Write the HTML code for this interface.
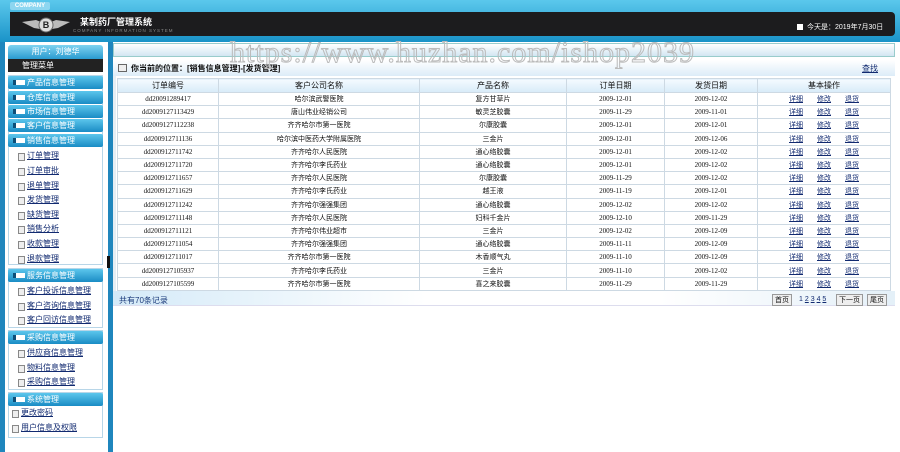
<!DOCTYPE html>
<html><head><meta charset="utf-8"><style>
*{margin:0;padding:0;box-sizing:border-box}
body{width:900px;height:452px;overflow:hidden;background:#fff;font-family:"Liberation Sans","Noto Sans CJK SC",sans-serif;font-size:8px;color:#111;position:relative}
.a{position:absolute}
.mh{position:absolute;left:8px;width:95px;height:13px;background:linear-gradient(#5cc6ec,#1a8cc4);border-radius:2px;color:#fff;font-size:8px;line-height:13px;padding-left:19px}
.mh:before{content:"";position:absolute;left:5px;top:4px;width:9px;height:5px;background:#fff;border-left:3px solid #0d4e78}
.si{position:absolute;left:18px;color:#112a70;text-decoration:underline;font-size:8px;line-height:10px;padding-left:9px}
.si:before{content:"";position:absolute;left:0;top:2px;width:5px;height:6px;border:1px solid #888;background:#eee}
table{border-collapse:collapse;position:absolute;left:117px;top:78px;width:774px;font-size:7px}
td,th{border:1px solid #cdd9e3;text-align:center;height:13.2px;font-weight:normal;font-family:"Liberation Serif","Noto Sans CJK SC",serif}
th{background:linear-gradient(#f4faff,#d8ebf8);height:14px;font-family:"Liberation Sans","Noto Sans CJK SC",sans-serif;font-size:8px}
td a{color:#112a70;text-decoration:underline;margin:0 7px;font-family:"Liberation Sans","Noto Sans CJK SC",sans-serif}
</style></head><body>
<div class="a" style="left:0;top:0;width:900px;height:42px;background:linear-gradient(#5bc8ec,#1a93c8)"></div>
<div class="a" style="left:10px;top:2px;width:40px;height:8px;background:#8dd6f0;border-radius:2px;color:#fff;font-size:6px;font-weight:bold;line-height:8px;text-align:center">COMPANY</div>
<div class="a" style="left:10px;top:12px;width:885px;height:24px;background:#1c1c1e;border-radius:0 4px 4px 0"></div>
<div class="a" style="left:22px;top:14px;width:48px;height:20px;"><svg width="48" height="20"><path d="M0 8 L14 6 L24 10 L34 6 L48 8 L36 14 L24 16 L12 14Z" fill="#bbb"/><circle cx="24" cy="11" r="7" fill="#ddd" stroke="#666"/><text x="24" y="14" font-size="9" text-anchor="middle" font-weight="bold" fill="#222">B</text></svg></div>
<div class="a" style="left:80px;top:15px;color:#fff;font-size:9px;font-weight:bold">某制药厂管理系统</div>
<div class="a" style="left:73px;top:28px;color:#888;font-size:4.5px;letter-spacing:1px">COMPANY INFORMATION SYSTEM</div>
<div class="a" style="left:797px;top:24px;width:6px;height:6px;background:#fff"></div>
<div class="a" style="left:807px;top:22px;color:#fff;font-size:7px">今天是：2019年7月30日</div>
<!-- sidebar -->
<div class="a" style="left:0;top:42px;width:113px;height:410px;background:#1f86bd"></div>
<div class="a" style="left:5px;top:42px;width:103px;height:410px;background:#fff"></div>
<div class="a" style="left:8px;top:45px;width:95px;height:14px;background:linear-gradient(#7fd3f0,#2a9bd0);border-radius:3px 3px 0 0;color:#fff;text-align:center;line-height:14px;font-size:8px">用户：刘德华</div>
<div class="a" style="left:8px;top:59px;width:95px;height:13px;background:#222;color:#fff;line-height:13px;padding-left:14px;font-size:8px">管理菜单</div>
<div class="a" style="left:8px;top:75px;width:95px;height:190px;border:1px solid #b8d6e8"></div>
<div class="mh" style="top:76px">产品信息管理</div>
<div class="mh" style="top:91px">仓库信息管理</div>
<div class="mh" style="top:105px">市场信息管理</div>
<div class="mh" style="top:119px">客户信息管理</div>
<div class="mh" style="top:134px">销售信息管理</div>
<div class="si" style="top:151px">订单管理</div><div class="si" style="top:166px">订单审批</div>
<div class="si" style="top:181px">退单管理</div><div class="si" style="top:195px">发货管理</div>
<div class="si" style="top:210px">缺货管理</div><div class="si" style="top:224px">销售分析</div>
<div class="si" style="top:239px">收款管理</div><div class="si" style="top:254px">退款管理</div>
<div class="a" style="left:8px;top:268px;width:95px;height:60px;border:1px solid #b8d6e8"></div>
<div class="mh" style="top:269px">服务信息管理</div>
<div class="si" style="top:286px">客户投诉信息管理</div><div class="si" style="top:301px">客户咨询信息管理</div><div class="si" style="top:315px">客户回访信息管理</div>
<div class="a" style="left:8px;top:330px;width:95px;height:60px;border:1px solid #b8d6e8"></div>
<div class="mh" style="top:331px">采购信息管理</div>
<div class="si" style="top:348px">供应商信息管理</div><div class="si" style="top:363px">物料信息管理</div><div class="si" style="top:377px">采购信息管理</div>
<div class="a" style="left:8px;top:392px;width:95px;height:46px;border:1px solid #b8d6e8"></div>
<div class="mh" style="top:393px">系统管理</div>
<div class="si" style="top:408px;left:12px">更改密码</div><div class="si" style="top:423px;left:12px">用户信息及权限</div>
<div class="a" style="left:107px;top:256px;width:3px;height:12px;background:#111"></div>
<!-- main -->
<div class="a" style="left:113px;top:43px;width:782px;height:14px;background:linear-gradient(#fff,#d2e6f2);border:1px solid #9cc"></div>
<div class="a" style="left:113px;top:60px;width:782px;height:16px;background:linear-gradient(#fff,#dcecf8)"></div>
<div class="a" style="left:118px;top:64px;width:9px;height:8px;border:1px solid #666;background:#eee"></div>
<div class="a" style="left:131px;top:63px;font-size:8px;font-weight:bold">你当前的位置：[销售信息管理]-[发货管理]</div>
<div class="a" style="left:862px;top:63px;font-size:8px;color:#112a70;text-decoration:underline">查找</div>
<div class="a" style="left:113px;top:76px;width:3px;height:215px;background:#e6eef4"></div>
<table>
<tr><th style="width:101px">订单编号</th><th style="width:201px">客户公司名称</th><th style="width:147px">产品名称</th><th style="width:98px">订单日期</th><th style="width:93px">发货日期</th><th>基本操作</th></tr>
<tr><td>dd20091289417</td><td>哈尔滨武警医院</td><td>复方甘草片</td><td>2009-12-01</td><td>2009-12-02</td><td><a>详细</a><a>修改</a><a>退货</a></td></tr>
<tr><td>dd2009127113429</td><td>唐山伟业经销公司</td><td>敏灵芝胶囊</td><td>2009-11-29</td><td>2009-11-01</td><td><a>详细</a><a>修改</a><a>退货</a></td></tr>
<tr><td>dd2009127112238</td><td>齐齐哈尔市第一医院</td><td>尔康胶囊</td><td>2009-12-01</td><td>2009-12-01</td><td><a>详细</a><a>修改</a><a>退货</a></td></tr>
<tr><td>dd200912711136</td><td>哈尔滨中医药大学附属医院</td><td>三金片</td><td>2009-12-01</td><td>2009-12-06</td><td><a>详细</a><a>修改</a><a>退货</a></td></tr>
<tr><td>dd200912711742</td><td>齐齐哈尔人民医院</td><td>通心络胶囊</td><td>2009-12-01</td><td>2009-12-02</td><td><a>详细</a><a>修改</a><a>退货</a></td></tr>
<tr><td>dd200912711720</td><td>齐齐哈尔李氏药业</td><td>通心络胶囊</td><td>2009-12-01</td><td>2009-12-02</td><td><a>详细</a><a>修改</a><a>退货</a></td></tr>
<tr><td>dd200912711657</td><td>齐齐哈尔人民医院</td><td>尔康胶囊</td><td>2009-11-29</td><td>2009-12-02</td><td><a>详细</a><a>修改</a><a>退货</a></td></tr>
<tr><td>dd200912711629</td><td>齐齐哈尔李氏药业</td><td>越王液</td><td>2009-11-19</td><td>2009-12-01</td><td><a>详细</a><a>修改</a><a>退货</a></td></tr>
<tr><td>dd200912711242</td><td>齐齐哈尔强强集团</td><td>通心络胶囊</td><td>2009-12-02</td><td>2009-12-02</td><td><a>详细</a><a>修改</a><a>退货</a></td></tr>
<tr><td>dd200912711148</td><td>齐齐哈尔人民医院</td><td>妇科千金片</td><td>2009-12-10</td><td>2009-11-29</td><td><a>详细</a><a>修改</a><a>退货</a></td></tr>
<tr><td>dd200912711121</td><td>齐齐哈尔伟业超市</td><td>三金片</td><td>2009-12-02</td><td>2009-12-09</td><td><a>详细</a><a>修改</a><a>退货</a></td></tr>
<tr><td>dd200912711054</td><td>齐齐哈尔强强集团</td><td>通心络胶囊</td><td>2009-11-11</td><td>2009-12-09</td><td><a>详细</a><a>修改</a><a>退货</a></td></tr>
<tr><td>dd200912711017</td><td>齐齐哈尔市第一医院</td><td>木香顺气丸</td><td>2009-11-10</td><td>2009-12-09</td><td><a>详细</a><a>修改</a><a>退货</a></td></tr>
<tr><td>dd2009127105937</td><td>齐齐哈尔李氏药业</td><td>三金片</td><td>2009-11-10</td><td>2009-12-02</td><td><a>详细</a><a>修改</a><a>退货</a></td></tr>
<tr><td>dd2009127105599</td><td>齐齐哈尔市第一医院</td><td>喜之来胶囊</td><td>2009-11-29</td><td>2009-11-29</td><td><a>详细</a><a>修改</a><a>退货</a></td></tr>
</table>
<div class="a" style="left:113px;top:291px;width:782px;height:15px;background:linear-gradient(90deg,#d4eaf8,#fff 40%,#fff 70%,#e4f0f8);border-bottom:1px solid #dde"></div>
<div class="a" style="left:119px;top:295px;font-size:8px;color:#1a3a7a">共有70条记录</div>
<div class="a" style="left:772px;top:294px;font-size:7px;border:1px solid #999;background:#eee;padding:0 2px">首页</div>
<div class="a" style="left:799px;top:296px;font-size:7px;color:#112a70">1 <u>2</u> <u>3</u> <u>4</u> <u>5</u></div>
<div class="a" style="left:836px;top:294px;font-size:7px;border:1px solid #999;background:#eee;padding:0 2px">下一页</div>
<div class="a" style="left:867px;top:294px;font-size:7px;border:1px solid #999;background:#eee;padding:0 2px">尾页</div>
<div class="a" style="left:230px;top:36px;font-size:30px;font-family:'Liberation Serif',serif;color:transparent;-webkit-text-stroke:1px #bbb;letter-spacing:1px">https://www.huzhan.com/ishop2039</div>
</body></html>
